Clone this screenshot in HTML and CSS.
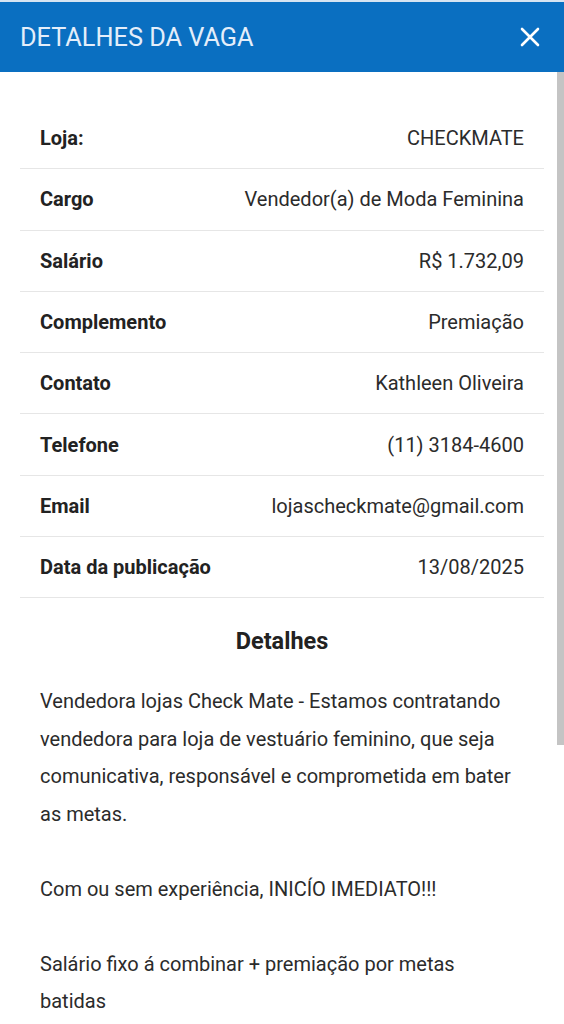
FILE: index.html
```html
<!DOCTYPE html>
<html lang="pt-BR">
<head>
    <meta charset="UTF-8" />
    <meta name="viewport" content="width=device-width, initial-scale=1" />
    <title>Detalhes da vaga</title>
    <link rel="stylesheet" href="styles.css">
</head>
<body>
    <div class="modal">
        <header class="modal-header">
            <h1 class="modal-title">DETALHES DA VAGA</h1>
            <button class="close-btn" aria-label="Fechar">
                <svg width="20" height="20" viewBox="0 0 20 20">
                    <path d="M2 2 L18 18 M18 2 L2 18" stroke="#fff" stroke-width="2.6" stroke-linecap="round" fill="none" />
                </svg>
            </button>
        </header>

        <div class="modal-body">
            <dl class="info-list">
                <div class="info-row"><dt>Loja:</dt><dd>CHECKMATE</dd></div>
                <div class="info-row"><dt>Cargo</dt><dd>Vendedor(a) de Moda Feminina</dd></div>
                <div class="info-row"><dt>Salário</dt><dd>R$ 1.732,09</dd></div>
                <div class="info-row"><dt>Complemento</dt><dd>Premiação</dd></div>
                <div class="info-row"><dt>Contato</dt><dd>Kathleen Oliveira</dd></div>
                <div class="info-row"><dt>Telefone</dt><dd>(11) 3184-4600</dd></div>
                <div class="info-row"><dt>Email</dt><dd>lojascheckmate@gmail.com</dd></div>
                <div class="info-row"><dt>Data da publicação</dt><dd>13/08/2025</dd></div>
            </dl>

            <h2 class="section-title">Detalhes</h2>
            <p class="description">
                Vendedora lojas Check Mate - Estamos contratando vendedora para loja de vestuário feminino, que seja comunicativa, responsável e comprometida em bater as metas.<br><br>
                Com ou sem experiência, INICÍO IMEDIATO!!!<br><br>
                Salário fixo á combinar + premiação por metas batidas
            </p>
        </div>

        <!-- barra de rolagem -->
        <div class="scroll-thumb"></div>
    </div>
</body>
</html>
```

FILE: styles.css
```css
:root {
    --primary: #0a6fc1;
    --title-light: #e4eefa;
    --text: #2b2b2b;
    --label: #222;
    --border: #e6e6e6;
    --thumb: #c4c4c4;
}
html, body {
    margin: 0;
    padding: 0;
    height: 100%;
    overflow: hidden;
}
body {
    font-family: Roboto, "Liberation Sans", Arial, sans-serif;
    background-color: #fff;
    color: var(--text);
}
.modal {
    position: relative;
    height: 100%;
}
.modal-header {
    display: flex;
    align-items: center;
    justify-content: space-between;
    height: 70px;
    padding: 0 20px;
    background-color: var(--primary);
    border-top: 2px solid #d6e4f2;
}
.modal-title {
    margin: 0;
    font-size: 25.3px;
    font-weight: 400;
    color: var(--title-light);
}
.close-btn {
    display: flex;
    align-items: center;
    justify-content: center;
    width: 24px;
    height: 24px;
    padding: 0;
    margin-right: 2px;
    border: none;
    background: none;
    cursor: pointer;
}
.modal-body {
    padding: 36px 20px 0 20px;
}
.info-list {
    margin: 0;
    font-size: 20px;
}
.info-row {
    display: flex;
    justify-content: space-between;
    align-items: center;
    gap: 16px;
    padding: 18.15px 20px;
    line-height: 24px;
    border-bottom: 1px solid var(--border);
}
.info-row dt {
    font-weight: 700;
    color: var(--label);
    white-space: nowrap;
}
.info-row dd {
    margin: 0;
    text-align: right;
    color: var(--text);
    white-space: nowrap;
}
.section-title {
    margin: 29px 0 0 0;
    font-size: 23.5px;
    line-height: 28px;
    font-weight: 700;
    text-align: center;
    color: var(--label);
}
.description {
    margin: 28px 0 0 0;
    padding: 0 24px 0 20px;
    font-size: 20px;
    line-height: 37.5px;
    color: var(--text);
}
.scroll-thumb {
    position: absolute;
    top: 72px;
    right: 0;
    width: 7px;
    height: 673px;
    background-color: var(--thumb);
}
```
